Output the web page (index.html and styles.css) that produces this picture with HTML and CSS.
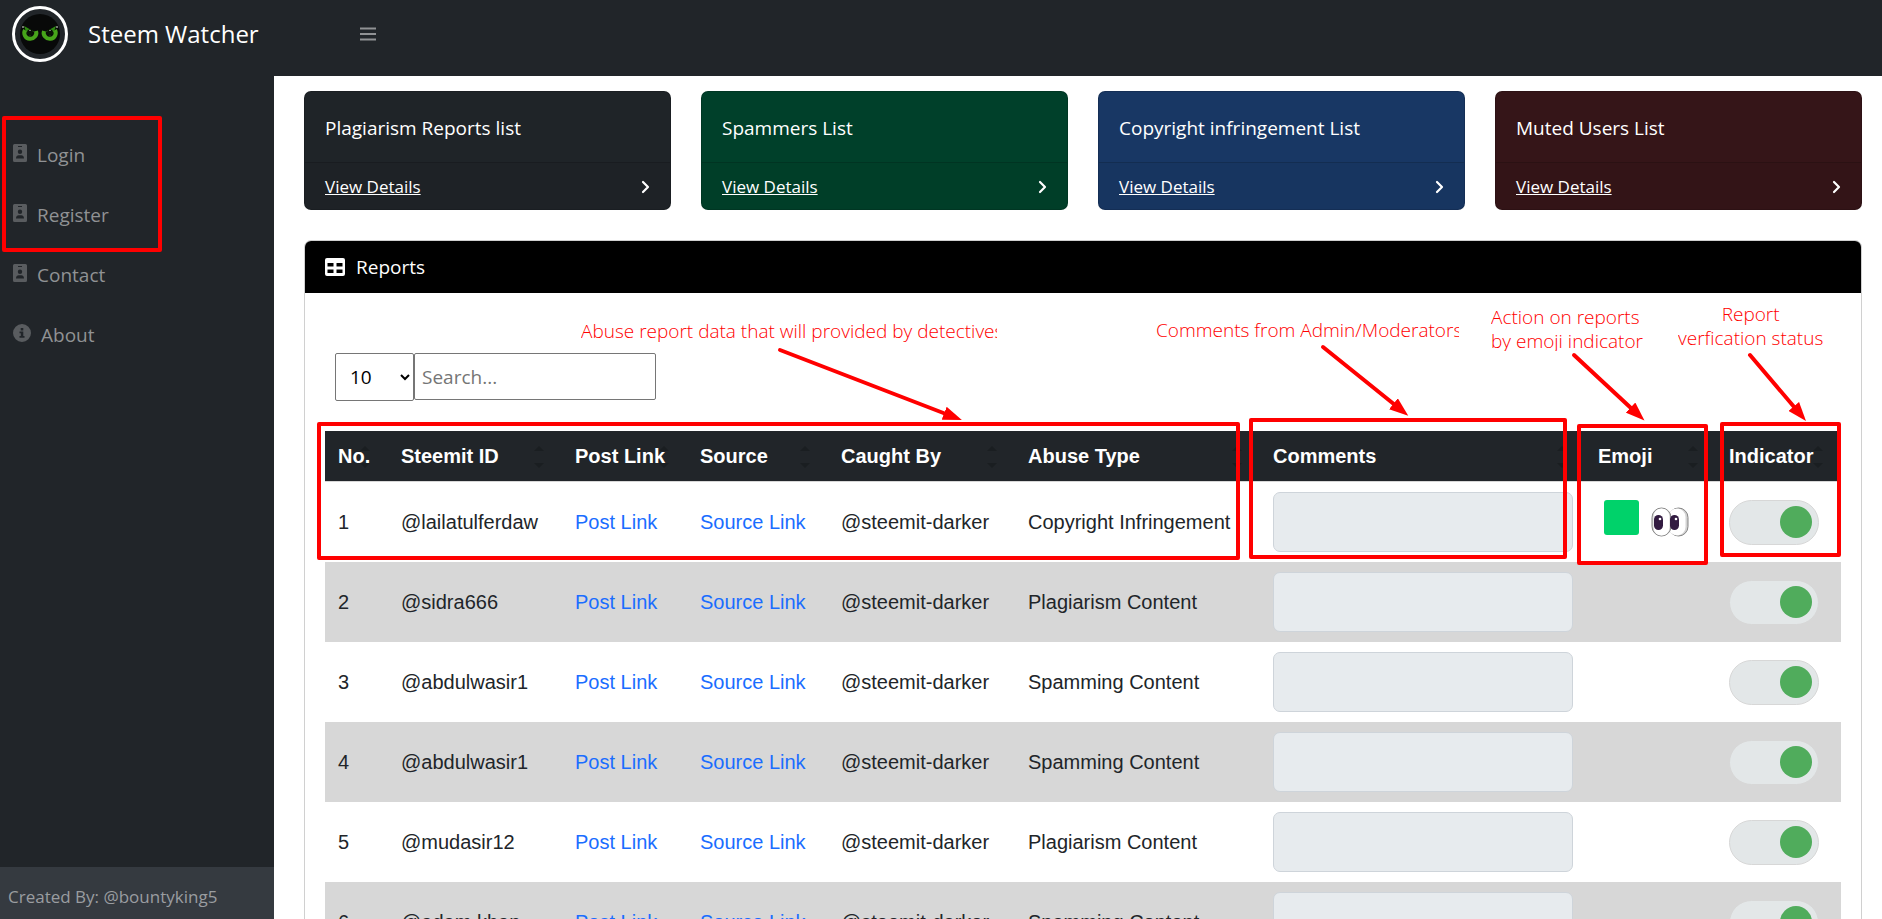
FILE: index.html
```html
<!DOCTYPE html>
<html lang="en">
<head>
  <meta charset="UTF-8">
  <meta name="viewport" content="width=device-width, initial-scale=1.0">
  <title>Steem Watcher</title>
  <link rel="stylesheet" href="styles.css">
</head>
<body>
  <!-- shared icons -->
  <svg class="sprite" aria-hidden="true">
    <symbol id="badge" viewBox="0 0 14 18">
      <path fill-rule="evenodd" d="M1.500 0h11A1.500 1.500 0 0 1 14 1.500v15a1.500 1.500 0 0 1-1.500 1.500h-11A1.500 1.500 0 0 1 0 16.500v-15A1.500 1.500 0 0 1 1.500 0zM5 2v1h4V2zM7 5.500a2.200 2.200 0 1 0 0 4.400 2.200 2.200 0 0 0 0-4.400zM3 14.500h8c0-2.300-1.300-3.300-2.600-3.300H5.600C4.300 11.200 3 12.200 3 14.500z"/>
    </symbol>
    <symbol id="chevron" viewBox="0 0 10 14">
      <path d="M3 2l5 5-5 5" fill="none" stroke="currentColor" stroke-width="2.200" stroke-linecap="round" stroke-linejoin="round"/>
    </symbol>
  </svg>

  <header class="topbar">
    <a class="brand" href="#">
      <svg class="logo" viewBox="0 0 56 56" aria-hidden="true">
        <circle cx="28" cy="28" r="26.500" fill="#212529" stroke="#fff" stroke-width="3"/>
        <circle cx="28" cy="28" r="20" fill="#080909"/>
        <path d="M12 20l10 5.500a4 4 0 0 0-3.500 4.500q-4-1.500-6.500-10z" fill="#2f8a12"/>
        <path d="M44 20l-10 5.500a4 4 0 0 1 3.500 4.500q4-1.500 6.500-10z" fill="#2f8a12"/>
        <path d="M13 24a6 6 0 1 0 11 1" fill="none" stroke="#47a51a" stroke-width="4"/>
        <path d="M43 24a6 6 0 1 1-11 1" fill="none" stroke="#47a51a" stroke-width="4"/>
        <circle cx="18" cy="26.500" r="3" fill="#0a1206"/>
        <circle cx="38" cy="26.500" r="3" fill="#0a1206"/>
        <path d="M11 20v2M45 20v2M18 24v1M38 24v1" stroke="#dfe6dc"/>
      </svg>
      <span>Steem Watcher</span>
    </a>
    <button class="menu-btn" type="button" aria-label="Toggle sidebar">
      <svg viewBox="0 0 16 14" aria-hidden="true"><path d="M0 1.500h16M0 7h16M0 12.500h16"/></svg>
    </button>
  </header>

  <div class="layout">
    <aside class="sidebar">
      <nav class="nav">
        <a href="#"><svg class="badge"><use href="#badge"/></svg>Login</a>
        <a href="#"><svg class="badge"><use href="#badge"/></svg>Register</a>
        <a href="#"><svg class="badge"><use href="#badge"/></svg>Contact</a>
        <a href="#">
          <svg class="info" viewBox="0 0 18 18"><path fill-rule="evenodd" d="M9 0a9 9 0 1 0 0 18A9 9 0 0 0 9 0zM7.700 4h2.600v2.400H7.700zM6.500 7.500h3.800v4.500h1.200v1.800h-5V12h1.300V9.300H6.500z"/></svg>About
        </a>
      </nav>
      <div class="credit">Created By: @bountyking5</div>
    </aside>

    <main class="content">
      <section class="cards">
        <div class="card card-dark">
          <div class="card-title">Plagiarism Reports list</div>
          <div class="card-footer"><a href="#">View Details</a><svg class="chevron"><use href="#chevron"/></svg></div>
        </div>
        <div class="card card-green">
          <div class="card-title">Spammers List</div>
          <div class="card-footer"><a href="#">View Details</a><svg class="chevron"><use href="#chevron"/></svg></div>
        </div>
        <div class="card card-blue">
          <div class="card-title">Copyright infringement List</div>
          <div class="card-footer"><a href="#">View Details</a><svg class="chevron"><use href="#chevron"/></svg></div>
        </div>
        <div class="card card-red">
          <div class="card-title">Muted Users List</div>
          <div class="card-footer"><a href="#">View Details</a><svg class="chevron"><use href="#chevron"/></svg></div>
        </div>
      </section>

      <section class="reports">
        <h2 class="reports-header">
          <svg viewBox="0 0 20 18" aria-hidden="true"><path fill-rule="evenodd" d="M2 0h16a2 2 0 0 1 2 2v14a2 2 0 0 1-2 2H2a2 2 0 0 1-2-2V2a2 2 0 0 1 2-2zM2.500 5v3.500h6V5zM11.500 5v3.500h6V5zM2.500 11.500V15h6v-3.500zM11.500 11.500V15h6v-3.500z"/></svg>
          Reports
        </h2>
        <div class="reports-body">
          <div class="filters">
            <select class="page-size" aria-label="Entries per page">
              <option>10</option>
              <option>25</option>
              <option>50</option>
            </select>
            <input class="search" type="search" placeholder="Search..." aria-label="Search reports">
          </div>
          <table class="table">
            <colgroup>
              <col class="col-no"><col class="col-id"><col class="col-post"><col class="col-source"><col class="col-caught"><col><col class="col-comments"><col class="col-emoji"><col class="col-indicator">
            </colgroup>
            <thead>
              <tr>
                <th>No.</th><th>Steemit ID</th><th>Post Link</th><th>Source</th><th>Caught By</th><th>Abuse Type</th><th>Comments</th><th>Emoji</th><th>Indicator</th>
              </tr>
            </thead>
            <tbody>
              <tr>
                <td>1</td><td>@lailatulferdaw</td><td><a href="#">Post Link</a></td><td><a href="#">Source Link</a></td><td>@steemit-darker</td><td>Copyright Infringement</td>
                <td><textarea aria-label="Comment on report 1" readonly></textarea></td>
                <td>
                  <div class="emoji">
                    <span class="square"></span>
                    <svg viewBox="0 0 38 30" aria-hidden="true">
                      <rect x="18" y="1" width="19" height="28" rx="9.500" fill="#d3d3d3" stroke="#858585"/>
                      <rect x="17.500" y="1.500" width="17" height="27" rx="8.500" fill="#fff"/>
                      <rect x="1" y="1" width="19" height="28" rx="9.500" fill="#d3d3d3" stroke="#858585"/>
                      <rect x="2.500" y="1.500" width="16" height="27" rx="8" fill="#fff"/>
                      <rect x="3" y="8" width="9" height="15" rx="4.500" fill="#321b41"/>
                      <rect x="19" y="8" width="9" height="15" rx="4.500" fill="#321b41"/>
                      <circle cx="9" cy="12" r="1.300" fill="#fff"/>
                      <circle cx="25" cy="12" r="1.300" fill="#fff"/>
                    </svg>
                  </div>
                </td>
                <td><input class="toggle" type="checkbox" aria-label="Report 1 verified" checked></td>
              </tr>
              <tr>
                <td>2</td><td>@sidra666</td><td><a href="#">Post Link</a></td><td><a href="#">Source Link</a></td><td>@steemit-darker</td><td>Plagiarism Content</td>
                <td><textarea aria-label="Comment on report 2" readonly></textarea></td>
                <td></td>
                <td><input class="toggle" type="checkbox" aria-label="Report 2 verified" checked></td>
              </tr>
              <tr>
                <td>3</td><td>@abdulwasir1</td><td><a href="#">Post Link</a></td><td><a href="#">Source Link</a></td><td>@steemit-darker</td><td>Spamming Content</td>
                <td><textarea aria-label="Comment on report 3" readonly></textarea></td>
                <td></td>
                <td><input class="toggle" type="checkbox" aria-label="Report 3 verified" checked></td>
              </tr>
              <tr>
                <td>4</td><td>@abdulwasir1</td><td><a href="#">Post Link</a></td><td><a href="#">Source Link</a></td><td>@steemit-darker</td><td>Spamming Content</td>
                <td><textarea aria-label="Comment on report 4" readonly></textarea></td>
                <td></td>
                <td><input class="toggle" type="checkbox" aria-label="Report 4 verified" checked></td>
              </tr>
              <tr>
                <td>5</td><td>@mudasir12</td><td><a href="#">Post Link</a></td><td><a href="#">Source Link</a></td><td>@steemit-darker</td><td>Plagiarism Content</td>
                <td><textarea aria-label="Comment on report 5" readonly></textarea></td>
                <td></td>
                <td><input class="toggle" type="checkbox" aria-label="Report 5 verified" checked></td>
              </tr>
              <tr>
                <td>6</td><td>@adam.khan</td><td><a href="#">Post Link</a></td><td><a href="#">Source Link</a></td><td>@steemit-darker</td><td>Spamming Content</td>
                <td><textarea aria-label="Comment on report 6" readonly></textarea></td>
                <td></td>
                <td><input class="toggle" type="checkbox" aria-label="Report 6 verified" checked></td>
              </tr>
            </tbody>
          </table>
        </div>
      </section>
    </main>
  </div>

  <!-- red notes over the page -->
  <svg class="marks" aria-hidden="true">
    <defs>
      <marker id="head" markerUnits="userSpaceOnUse" markerWidth="20" markerHeight="14" refX="2" refY="7" orient="auto">
        <path d="M0 0l19 7-19 7z" fill="#f00"/>
      </marker>
    </defs>
    <rect x="4" y="118" width="156" height="132"/>
    <rect x="319" y="424" width="919" height="134"/>
    <rect x="1251" y="420" width="314" height="137"/>
    <rect x="1579" y="426" width="127" height="137"/>
    <rect x="1722" y="424" width="117" height="131"/>
    <path d="M780 350L946 414" marker-end="url(#head)"/>
    <path d="M1323 347L1395 405" marker-end="url(#head)"/>
    <path d="M1574 355L1632 409" marker-end="url(#head)"/>
    <path d="M1750 355L1795 408" marker-end="url(#head)"/>
  </svg>
  <p class="note note-data">Abuse report data that will provided by detectives</p>
  <p class="note note-comments">Comments from Admin/Moderators</p>
  <p class="note note-emoji">Action on reports<br>by emoji indicator</p>
  <p class="note note-status">Report<br>verfication status</p>
</body>
</html>
```
FILE: styles.css
```css
* {
  box-sizing: border-box;
}
body {
  margin: 0;
  height: 100vh;
  display: flex;
  flex-direction: column;
  position: relative;
  overflow: hidden;
  font-family: 'Segoe UI', 'Open Sans', sans-serif;
  font-size: 19px;
  line-height: 30px;
  color: #212529;
  background: #fff;
}
.sprite {
  display: none;
}
.topbar {
  flex: none;
  height: 76px;
  display: flex;
  align-items: flex-start;
  background: #212529;
}
.brand {
  width: 350px;
  padding: 6px 12px;
  display: flex;
  align-items: center;
  gap: 20px;
  font-size: 24px;
  color: #fff;
  text-decoration: none;
}
.logo {
  width: 56px;
  height: 56px;
}
.menu-btn {
  margin: 17px 0;
  padding: 10px;
  display: flex;
  background: none;
  border: 0;
}
.menu-btn svg {
  width: 16px;
  height: 14px;
  fill: none;
  stroke: #909294;
  stroke-width: 2;
}
.layout {
  flex: 1;
  min-height: 0;
  display: flex;
}
.sidebar {
  flex: none;
  width: 274px;
  display: flex;
  flex-direction: column;
  justify-content: space-between;
  background: #212529;
}
.nav {
  padding-top: 49px;
}
.nav a {
  height: 60px;
  padding-left: 13px;
  display: flex;
  align-items: center;
  gap: 10px;
  color: #909294;
  text-decoration: none;
}
.nav svg {
  width: 14px;
  height: 18px;
  margin-bottom: 4px;
  fill: #595c5f;
}
.nav .info {
  width: 18px;
}
.credit {
  height: 52px;
  padding: 15px 8px;
  font-size: 17px;
  background: #353a40;
  color: #9a9da0;
}
.content {
  flex: 1;
  min-width: 0;
  padding: 15px 20px 0 30px;
  overflow: hidden;
}
.cards {
  display: grid;
  grid-template-columns: repeat(4, 1fr);
  gap: 30px;
}
.card {
  border-radius: 7px;
  border: 1px solid rgba(0, 0, 0, 0.15);
  color: #fff;
}
.card-title {
  padding: 21px 20px 19px;
}
.card-footer {
  padding: 10px 20px 8px;
  display: flex;
  align-items: center;
  justify-content: space-between;
  border-top: 1px solid rgba(0, 0, 0, 0.15);
  background: rgba(0, 0, 0, 0.03);
  font-size: 17px;
  line-height: 28px;
}
.card-footer a {
  color: #fff;
}
.chevron {
  width: 10px;
  height: 14px;
}
.card-dark {
  background: #1f2428;
}
.card-green {
  background: #00402a;
}
.card-blue {
  background: #183764;
}
.card-red {
  background: #351518;
}
.reports {
  margin-top: 30px;
  border: 1px solid #d0d0d0;
  border-radius: 7px;
  overflow: hidden;
}
.reports-header {
  margin: 0;
  padding: 10px 20px;
  display: flex;
  align-items: center;
  gap: 11px;
  font-size: 19px;
  font-weight: 400;
  line-height: 32px;
  background: #000;
  color: #fff;
}
.reports-header svg {
  width: 20px;
  height: 18px;
  fill: #fff;
}
.reports-body {
  padding: 60px 20px 20px;
}
.filters {
  margin-bottom: 30px;
  padding-left: 10px;
  display: flex;
  align-items: flex-start;
}
.page-size,
.search {
  font-family: inherit;
  font-size: 19px;
  background: #fff;
  border: 1px solid #767676;
  border-radius: 2px;
  color: #000;
}
.page-size {
  width: 79px;
  height: 48px;
  padding: 0 0 0 10px;
}
.search {
  width: 242px;
  height: 47px;
  padding: 0 7px;
}
.search::placeholder {
  color: #757575;
}
.table {
  width: 100%;
  table-layout: fixed;
  border-collapse: collapse;
  font-family: Arial, 'Liberation Sans', sans-serif;
  font-size: 20px;
  white-space: nowrap;
}
.col-no {
  width: 63px;
}
.col-id {
  width: 174px;
}
.col-post {
  width: 125px;
}
.col-source {
  width: 141px;
}
.col-caught {
  width: 187px;
}
.col-comments {
  width: 325px;
}
.col-emoji {
  width: 131px;
}
.col-indicator {
  width: 125px;
}
.table th {
  position: relative;
  padding: 10px 0 10px 13px;
  text-align: left;
  background: #212529;
  color: #fff;
}
/* sort arrows */
.table th::before,
.table th::after {
  content: '';
  position: absolute;
  right: 18px;
  border: 5px solid transparent;
}
.table th::before {
  top: 10px;
  border-bottom-color: #1a1e21;
}
.table th::after {
  bottom: 8px;
  border-top-color: #1a1e21;
}
.table td {
  height: 80px;
  padding: 10px 12px 10px 13px;
}
.table tbody tr:first-child td {
  border-top: 1px solid #d7d7d7;
}
.table tbody tr:nth-child(even) {
  background: #d7d7d7;
}
.table a {
  color: #1a6dff;
  text-decoration: none;
}
.table textarea {
  display: block;
  width: 100%;
  height: 60px;
  border: 1px solid #ced4da;
  border-radius: 7px;
  background: #e7ebee;
  resize: none;
}
.emoji {
  padding-left: 6px;
  display: flex;
  align-items: center;
  gap: 12px;
}
.square {
  width: 35px;
  height: 35px;
  margin-bottom: 10px;
  border-radius: 3px;
  background: #00d26a;
}
.emoji svg {
  width: 38px;
  height: 30px;
}
.toggle {
  appearance: none;
  display: flex;
  align-items: center;
  justify-content: flex-end;
  width: 90px;
  height: 45px;
  margin: 0;
  padding-right: 6px;
  border: 1px solid #d7d7d7;
  border-radius: 23px;
  background: #e3e7e8;
}
.toggle::before {
  content: '';
  width: 32px;
  height: 32px;
  border-radius: 50%;
  background: #50ac5c;
}
.marks {
  position: absolute;
  top: 0;
  left: 0;
  width: 100%;
  height: 100%;
  fill: none;
  stroke: #f00;
  stroke-width: 4;
  stroke-linecap: round;
  stroke-linejoin: round;
  pointer-events: none;
}
.marks marker {
  stroke: none;
}
.note {
  position: absolute;
  margin: 0;
  overflow: hidden;
  font-size: 19px;
  font-weight: 300;
  line-height: 24px;
  white-space: nowrap;
  color: #f00;
}
.note-data {
  top: 319px;
  left: 581px;
  width: 416px;
}
.note-comments {
  top: 318px;
  left: 1156px;
  width: 303px;
}
.note-emoji {
  top: 305px;
  left: 1491px;
  height: 46px;
}
.note-status {
  top: 302px;
  left: 1678px;
  text-align: center;
}
```
